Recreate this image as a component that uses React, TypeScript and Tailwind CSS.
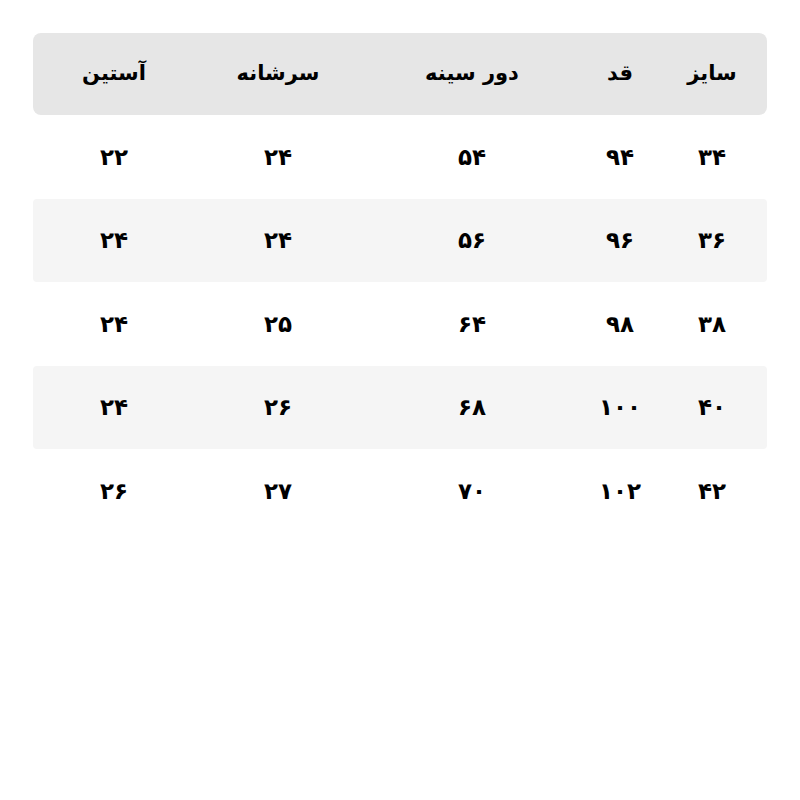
const headers = ["سایز", "قد", "دور سینه", "سرشانه", "آستین"];

const rows = [
  ["۳۴", "۹۴", "۵۴", "۲۴", "۲۲"],
  ["۳۶", "۹۶", "۵۶", "۲۴", "۲۴"],
  ["۳۸", "۹۸", "۶۴", "۲۵", "۲۴"],
  ["۴۰", "۱۰۰", "۶۸", "۲۶", "۲۴"],
  ["۴۲", "۱۰۲", "۷۰", "۲۷", "۲۶"],
];

const App = () => {
  return (
    <div
      dir="rtl"
      className="min-h-screen bg-white p-[33px] text-black"
      style={{ fontFamily: '"DejaVu Sans", "Noto Sans", sans-serif' }}
    >
      <div className="w-[734px]">
        <div className="grid h-[82px] grid-cols-[110px_74px_222px_166px_162px] items-center rounded-lg bg-[#e6e6e6] text-[21px] font-bold">
          {headers.map((h) => (
            <div key={h} className="text-center">
              {h}
            </div>
          ))}
        </div>

        {rows.map((row, i) => (
          <div
            key={i}
            className={
              i % 2 === 1
                ? "grid h-[83.5px] grid-cols-[110px_74px_222px_166px_162px] items-center rounded-sm bg-[#f5f5f5] text-[23px] font-bold"
                : "grid h-[83.5px] grid-cols-[110px_74px_222px_166px_162px] items-center text-[23px] font-bold"
            }
          >
            {row.map((cell, j) => (
              <div key={j} className="text-center">
                {cell}
              </div>
            ))}
          </div>
        ))}
      </div>
    </div>
  );
};

export default App;
